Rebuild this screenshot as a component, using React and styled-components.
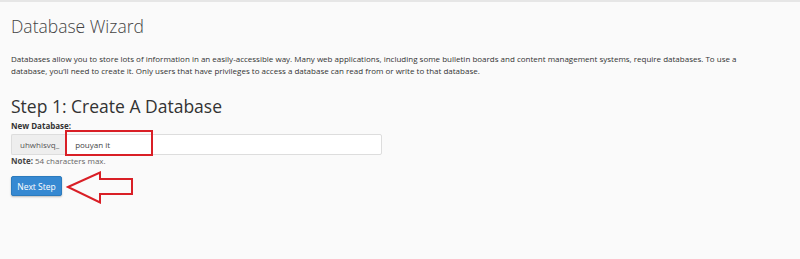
import React from 'react'
import styled, {createGlobalStyle} from 'styled-components'

const GlobalStyle = createGlobalStyle`
  html, body {
    margin: 0;
    padding: 0;
    background: #fafafa;
  }
  body {
    font-family: 'Open Sans', 'Liberation Sans', sans-serif;
    color: #333;
  }
`

const Page = styled.div`
  min-height: 259px;
  box-sizing: border-box;
  border-top: 2px solid #e6e6e6;
  padding: 0 11px;
`

const Title = styled.h1`
  margin: 12px 0 0;
  font-size: 17.5px;
  font-weight: 300;
  line-height: 24px;
  color: #444;
`

const Intro = styled.p`
  margin: 15px 0 0;
  max-width: 760px;
  font-size: 8px;
  line-height: 12px;
  color: #333;
`

const StepTitle = styled.h2`
  margin: 18px 0 0;
  font-size: 17.5px;
  font-weight: 400;
  line-height: 22px;
  color: #333;
`

const Label = styled.label`
  display: block;
  margin-top: 3px;
  font-size: 8px;
  font-weight: 700;
  line-height: 11px;
`

const InputGroup = styled.div`
  position: relative;
  display: flex;
  width: 371px;
  height: 21px;
  margin-top: 3px;
`

const Addon = styled.span`
  display: flex;
  align-items: center;
  padding: 0 7px 0 8px;
  background: #eee;
  border: 1px solid #ddd;
  border-right: none;
  border-radius: 2px 0 0 2px;
  font-size: 8px;
  color: #555;
`

const TextInput = styled.input`
  flex: 1;
  min-width: 0;
  margin: 0;
  padding: 0 8px;
  border: 1px solid #ddd;
  border-radius: 0 2px 2px 0;
  background: #fff;
  font-family: inherit;
  font-size: 8px;
  color: #444;
  outline: none;
`

const Highlight = styled.div`
  position: absolute;
  left: 54px;
  top: -4px;
  width: 84px;
  height: 22px;
  border: 2px solid #d91f26;
  pointer-events: none;
`

const Note = styled.div`
  margin-top: 0;
  font-size: 8px;
  line-height: 11px;
  color: #666;
  b {
    color: #444;
  }
`

const ActionRow = styled.div`
  display: flex;
  align-items: flex-start;
  gap: 2px;
  margin-top: 10px;
`

const PrimaryButton = styled.button`
  width: 51px;
  height: 20px;
  padding: 0;
  border: 1px solid #2c7bbd;
  border-radius: 2px;
  background: #3689d2;
  box-shadow: 0 1px 2px rgba(0, 0, 0, 0.25);
  font-family: inherit;
  font-size: 8.5px;
  color: #fff;
  cursor: pointer;
`

const ArrowSvg = styled.svg`
  margin-top: -5px;
  flex: none;
`

const Arrow = () => (
  <ArrowSvg width="71" height="33" viewBox="0 0 71 33">
    <path
      d="M4 16 L36 1.5 L36 8 L68 8 L68 23 L36 23 L36 31.5 Z"
      fill="none"
      stroke="#d91f26"
      strokeWidth="2"
    />
  </ArrowSvg>
)

export default function App() {
  return (
    <>
      <GlobalStyle />
      <Page>
        <Title>Database Wizard</Title>
        <Intro>
          Databases allow you to store lots of information in an easily-accessible way. Many web
          applications, including some bulletin boards and content management systems, require
          databases. To use a database, you’ll need to create it. Only users that have privileges
          to access a database can read from or write to that database.
        </Intro>
        <StepTitle>Step 1: Create A Database</StepTitle>
        <Label htmlFor="db">New Database:</Label>
        <InputGroup>
          <Addon>uhwhisvq_</Addon>
          <TextInput id="db" defaultValue="pouyan it" />
          <Highlight />
        </InputGroup>
        <Note>
          <b>Note:</b> 54 characters max.
        </Note>
        <ActionRow>
          <PrimaryButton>Next Step</PrimaryButton>
          <Arrow />
        </ActionRow>
      </Page>
    </>
  )
}
